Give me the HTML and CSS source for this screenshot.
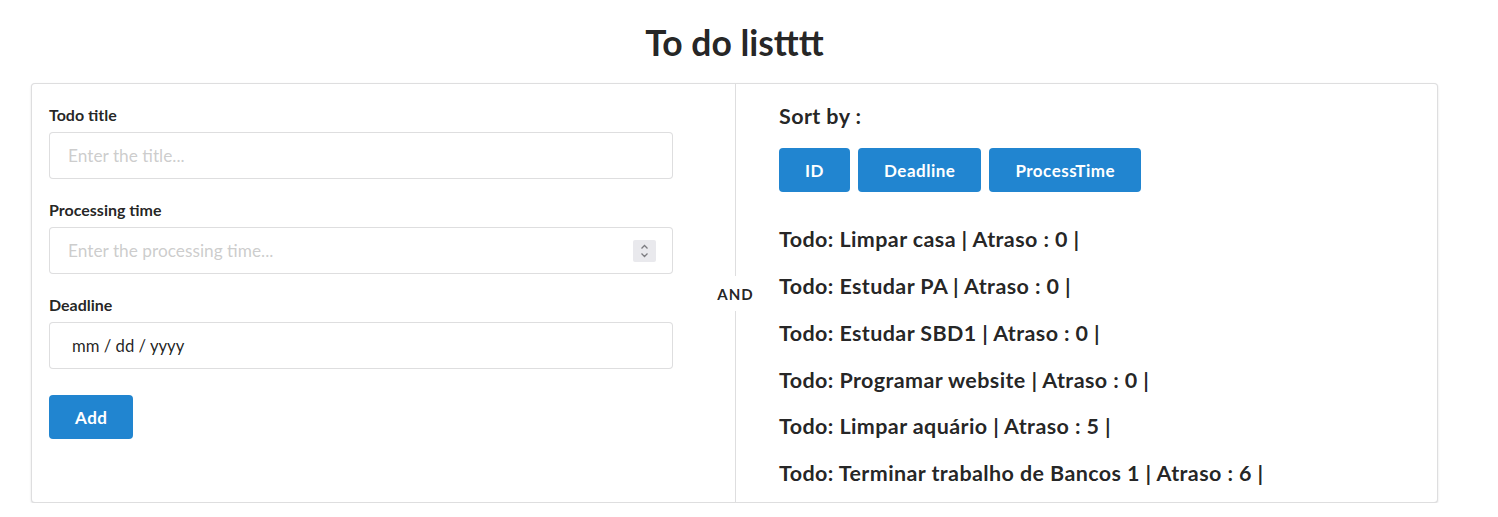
FILE: index.html
```html
<!DOCTYPE html>
<html lang="en">
<head>
<meta charset="utf-8">
<title>To do listttt</title>
<link rel="stylesheet" href="styles.css">
</head>
<body>
<div class="page">
  <h1 class="title">To do listttt</h1>
  <div class="segment">
    <div class="col-left">
      <form class="form">
        <div class="field">
          <label class="label">Todo title</label>
          <input class="input" type="text" placeholder="Enter the title...">
        </div>
        <div class="field">
          <label class="label">Processing time</label>
          <div class="input-wrap">
            <input class="input" type="text" placeholder="Enter the processing time...">
            <span class="spinner">
              <svg width="23" height="22" viewBox="0 0 23 22"><path d="M8.5 8.5 L11.5 5.5 L14.5 8.5" fill="none" stroke="#7b7b80" stroke-width="1.3"/><path d="M8.5 13.5 L11.5 16.5 L14.5 13.5" fill="none" stroke="#7b7b80" stroke-width="1.3"/></svg>
            </span>
          </div>
        </div>
        <div class="field">
          <label class="label">Deadline</label>
          <input class="input date" type="text" value="mm / dd / yyyy" readonly>
        </div>
        <button class="btn add" type="button">Add</button>
      </form>
    </div>
    <div class="divider">
      <span class="line"></span>
      <span class="divider-text">AND</span>
      <span class="line"></span>
    </div>
    <div class="col-right">
      <h3 class="sort-title">Sort by :</h3>
      <div class="btn-row">
        <button class="btn" type="button">ID</button>
        <button class="btn" type="button">Deadline</button>
        <button class="btn" type="button">ProcessTime</button>
      </div>
      <div class="todo-list">
        <h3 class="todo">Todo: Limpar casa | Atraso : 0 |</h3>
        <h3 class="todo">Todo: Estudar PA | Atraso : 0 |</h3>
        <h3 class="todo">Todo: Estudar SBD1 | Atraso : 0 |</h3>
        <h3 class="todo">Todo: Programar website | Atraso : 0 |</h3>
        <h3 class="todo">Todo: Limpar aquário | Atraso : 5 |</h3>
        <h3 class="todo">Todo: Terminar trabalho de Bancos 1 | Atraso : 6 |</h3>
      </div>
    </div>
  </div>
</div>
</body>
</html>
```
FILE: styles.css
```css
* { box-sizing: border-box; }
html, body {
  margin: 0;
  padding: 0;
  background: #ffffff;
}
body {
  font-family: Lato, "Helvetica Neue", Arial, Helvetica, sans-serif;
  color: rgba(0, 0, 0, 0.87);
  font-size: 16px;
}
.page {
  margin-left: 31px;
  width: 1407px;
}
.title {
  margin: 21px 0 18px 0;
  font-size: 35.5px;
  line-height: 44px;
  font-weight: 700;
  text-align: center;
}
.segment {
  display: flex;
  height: 420px;
  border: 1px solid rgba(34, 36, 38, 0.15);
  border-radius: 4px;
  box-shadow: 0 1px 2px 0 rgba(34, 36, 38, 0.15);
  background: #fff;
}
.col-left {
  width: 703px;
  padding: 21px 0 0 17px;
}
.form {
  width: 624px;
}
.field {
  margin-bottom: 21px;
}
.label {
  display: block;
  font-size: 16px;
  line-height: 19px;
  font-weight: 700;
  margin-bottom: 8px;
}
.input-wrap {
  position: relative;
}
.input {
  display: block;
  width: 100%;
  height: 47px;
  margin: 0;
  padding: 0 18px;
  font-family: inherit;
  font-size: 17.3px;
  color: rgba(0, 0, 0, 0.87);
  border: 1px solid rgba(34, 36, 38, 0.15);
  border-radius: 4px;
  background: #fff;
  outline: none;
}
.input::placeholder {
  color: rgba(191, 191, 191, 0.8);
}
.input.date {
  padding-left: 22px;
  font-size: 16.7px;
}
.spinner {
  position: absolute;
  right: 17px;
  top: 13px;
  width: 23px;
  height: 22px;
  background: #e9e9ed;
  border-radius: 2px;
  display: block;
}
.spinner svg { display: block; }
.btn {
  height: 44px;
  padding: 0 26px;
  border: none;
  border-radius: 4px;
  background: #2185d0;
  color: #fff;
  font-family: inherit;
  font-size: 17px;
  letter-spacing: 0.5px;
  font-weight: 700;
  cursor: pointer;
}
.add {
  margin-top: 5px;
}
.divider {
  width: 1px;
  display: flex;
  flex-direction: column;
  align-items: center;
}
.line {
  flex: 1;
  width: 1px;
  background: rgba(34, 36, 38, 0.15);
}
.divider-text {
  height: 35px;
  width: 60px;
  flex: none;
  text-align: center;
  font-size: 15px;
  font-weight: 700;
  line-height: 36px;
  letter-spacing: 1px;
}
.col-right {
  flex: 1;
  padding: 19px 0 0 43px;
}
.sort-title {
  margin: 0;
  font-size: 21.5px;
  letter-spacing: 0.4px;
  line-height: 26.45px;
  font-weight: 700;
}
.btn-row {
  display: flex;
  gap: 8px;
  margin-top: 19px;
}
.todo-list {
  display: flex;
  flex-direction: column;
  gap: 20.3px;
  margin-top: 34px;
}
.todo {
  margin: 0;
  font-size: 21.5px;
  letter-spacing: 0.4px;
  line-height: 26.45px;
  font-weight: 700;
}
```
